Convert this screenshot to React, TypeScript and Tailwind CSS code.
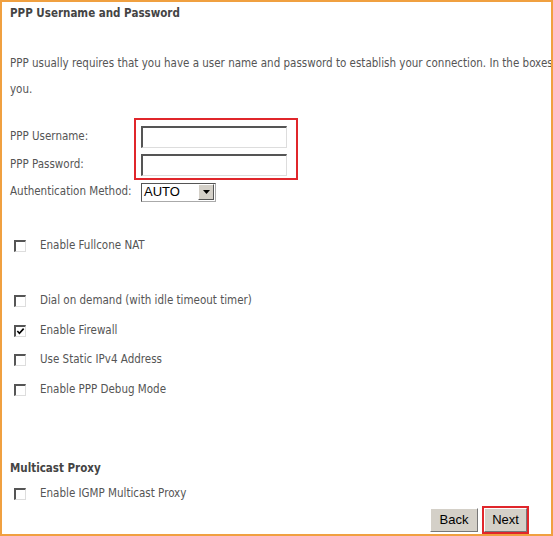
import React from "react";

const font = { fontFamily: "'DejaVu Sans Condensed', 'DejaVu Sans', sans-serif", fontStretch: "condensed" };

function Check({ checked = false }: { checked?: boolean }) {
  return (
    <span className="relative inline-block shrink-0 w-[12px] h-[12px] bg-white border-t-[2px] border-l-[2px] border-t-[#555] border-l-[#555] border-b border-r border-b-[#ddd] border-r-[#ddd]">
      {checked && (
        <svg viewBox="0 0 10 10" className="absolute left-[0px] top-[0px] w-[9px] h-[9px]">
          <path d="M1.5 4.5 L3.8 7 L8.5 1.8" fill="none" stroke="#000" strokeWidth="1.8" />
        </svg>
      )}
    </span>
  );
}

function CheckRow({ label, checked = false }: { label: string; checked?: boolean }) {
  return (
    <div className="flex items-center h-[20px] pl-[12px]">
      <Check checked={checked} />
      <span className="ml-[14px] whitespace-nowrap">{label}</span>
    </div>
  );
}

function TextBox() {
  return (
    <div className="w-[146px] h-[22px] bg-white border-t-[2px] border-l-[2px] border-t-[#555] border-l-[#555] border-b border-r border-b-[#ddd] border-r-[#ddd]" />
  );
}

export default function App() {
  return (
    <div
      className="w-[553px] h-[536px] overflow-hidden bg-white border-2 border-[#f0a040] text-[11.5px] text-[#555] relative"
      style={font}
    >
      <div className="pl-[8px] pt-[3px] font-bold text-[#444] h-[16px] leading-[16px]">PPP Username and Password</div>

      <div className="mt-[32px] pl-[8px] leading-[26px] whitespace-nowrap">
        PPP usually requires that you have a user name and password to establish your connection. In the boxes below, enter the user name and password that your ISP has provided to
      </div>
      <div className="pl-[8px] leading-[26px]">you.</div>

      {/* credentials */}
      <div className="relative mt-[21px] pl-[8px]">
        <div className="absolute left-[132px] top-[-5px] w-[164px] h-[62px] border-2 border-[#e0262b]" />
        <div className="flex items-center h-[28px]">
          <span className="w-[131px] whitespace-nowrap">PPP Username:</span>
          <TextBox />
        </div>
        <div className="flex items-center h-[28px]">
          <span className="w-[131px] whitespace-nowrap">PPP Password:</span>
          <TextBox />
        </div>
        <div className="flex items-center h-[26px]">
          <span className="w-[131px] whitespace-nowrap">Authentication Method:</span>
          <div className="flex items-center w-[75px] h-[19px] bg-white border border-[#555] border-b-[#aaa] border-r-[#aaa]">
            <span className="flex-1 pl-[2px] text-black text-[13px] leading-[16px]" style={{ fontFamily: "'Liberation Sans', Arial, sans-serif" }}>
              AUTO
            </span>
            <span className="w-[16px] h-[16px] mr-[1px] bg-[#d4d0c8] border border-t-white border-l-white border-b-[#555] border-r-[#555] flex items-center justify-center">
              <svg viewBox="0 0 7 4" className="w-[7px] h-[4px]">
                <path d="M0 0 H7 L3.5 4 Z" fill="#000" />
              </svg>
            </span>
          </div>
        </div>
      </div>

      <div className="mt-[31px]">
        <CheckRow label="Enable Fullcone NAT" />
      </div>

      <div className="mt-[35px] flex flex-col gap-[9.5px]">
        <CheckRow label="Dial on demand (with idle timeout timer)" />
        <CheckRow label="Enable Firewall" checked />
        <CheckRow label="Use Static IPv4 Address" />
        <CheckRow label="Enable PPP Debug Mode" />
      </div>

      <div className="mt-[58px] pl-[8px] font-bold text-[#444] h-[20px] leading-[20px]">Multicast Proxy</div>
      <div className="mt-[6px]">
        <CheckRow label="Enable IGMP Multicast Proxy" />
      </div>

      <div className="flex justify-end gap-[4px] pr-[22px] mt-[4px]" style={{ fontFamily: "'Liberation Sans', Arial, sans-serif" }}>
        <button className="w-[48px] h-[24px] bg-[#d4d0c8] text-black text-[13px] border border-t-white border-l-white border-b-[#777] border-r-[#777]">
          Back
        </button>
        <div className="border-2 border-[#e0262b] -mt-[2px] h-[28px]">
          <button className="w-[43px] h-[24px] bg-[#d4d0c8] text-black text-[13px] border border-t-white border-l-white border-b-[#777] border-r-[#777]">
            Next
          </button>
        </div>
      </div>
    </div>
  );
}
